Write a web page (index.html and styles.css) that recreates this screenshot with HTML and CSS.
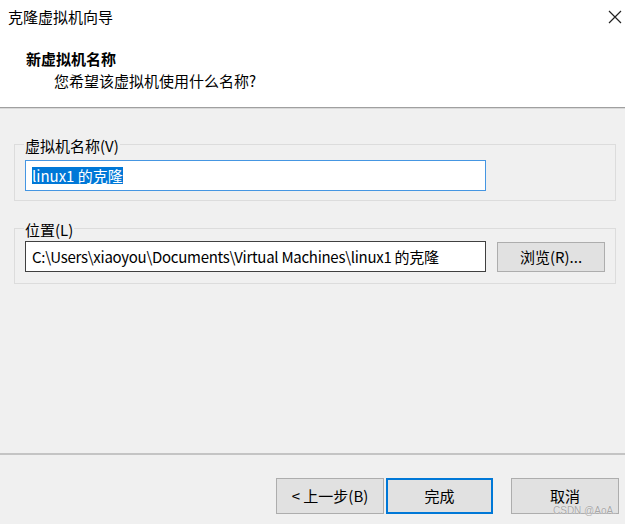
FILE: index.html
```html
<!DOCTYPE html>
<html lang="zh-CN">
<head>
<meta charset="utf-8">
<title>克隆虚拟机向导</title>
<link rel="stylesheet" href="styles.css">
</head>
<body>
<div class="dialog">
  <header class="header">
    <div class="titlebar">
      <span class="title">克隆虚拟机向导</span>
      <svg class="close" width="14" height="14" viewBox="0 0 14 14"><path d="M1 1 L13 13 M13 1 L1 13" stroke="#222" stroke-width="1.2" fill="none"/></svg>
    </div>
    <div class="heading">新虚拟机名称</div>
    <div class="subheading">您希望该虚拟机使用什么名称?</div>
  </header>
  <main class="main">
    <section class="group group-name">
      <span class="legend">虚拟机名称(V)</span>
      <div class="input input-focus"><span class="sel">linux1 的克隆</span></div>
    </section>
    <section class="group group-loc">
      <span class="legend">位置(L)</span>
      <div class="row">
        <div class="input input-plain">C:\Users\xiaoyou\Documents\Virtual Machines\linux1 的克隆</div>
        <div class="btn btn-browse">浏览(R)...</div>
      </div>
    </section>
  </main>
  <footer class="footer">
    <div class="btn btn-back">&lt; 上一步(B)</div>
    <div class="btn btn-finish">完成</div>
    <div class="btn btn-cancel">取消</div>
    <span class="watermark">CSDN @AoA.</span>
  </footer>
</div>
</body>
</html>
```
FILE: styles.css
```css
html, body {
  margin: 0;
  padding: 0;
}
body {
  width: 625px;
  height: 524px;
  overflow: hidden;
  font-family: "Noto Sans CJK SC", "Microsoft YaHei", sans-serif;
  font-size: 15px;
  color: #000;
  background: #f0f0f0;
}
.dialog {
  display: flex;
  flex-direction: column;
  height: 524px;
}
.header {
  background: #fff;
  height: 108px;
  box-sizing: border-box;
  padding-top: 7px;
  border-bottom: 1px solid #a0a0a0;
  box-shadow: 0 1px 0 #d9d9d9;
}
.titlebar {
  display: flex;
  justify-content: space-between;
  align-items: center;
  height: 20px;
  line-height: 20px;
  padding-left: 8px;
  padding-right: 3px;
}
.close {
  display: block;
}
.heading {
  margin-top: 22px;
  padding-left: 26px;
  line-height: 20px;
  font-weight: bold;
}
.subheading {
  margin-top: 2px;
  padding-left: 54px;
  line-height: 20px;
}
.main {
  flex: 1;
  padding-top: 36px;
}
.group {
  position: relative;
  margin-left: 14px;
  width: 602px;
  box-sizing: border-box;
  border: 1px solid #dcdcdc;
  padding: 0 10px;
}
.group-name {
  padding-top: 15px;
  padding-bottom: 9px;
}
.group-loc {
  margin-top: 27px;
  padding-top: 12px;
  padding-bottom: 11px;
}
.legend {
  position: absolute;
  top: -9px;
  left: 9px;
  padding: 0 1px;
  line-height: 20px;
  background: #f0f0f0;
}
.input {
  box-sizing: border-box;
  width: 461px;
  height: 31px;
  background: #fff;
  padding-left: 6px;
  display: flex;
  align-items: center;
  white-space: nowrap;
  overflow: hidden;
}
.input-focus {
  border: 1px solid #4596e2;
}
.input-plain {
  border: 1px solid #404040;
  letter-spacing: -0.28px;
}
.sel {
  background: #0078d7;
  color: #fff;
  line-height: 17px;
}
.row {
  display: flex;
  align-items: center;
  gap: 11px;
}
.btn {
  box-sizing: border-box;
  display: flex;
  align-items: center;
  justify-content: center;
  background: #e1e1e1;
  border: 1px solid #adadad;
  white-space: nowrap;
  line-height: 18px;
}
.btn-browse {
  width: 108px;
  height: 30px;
}
.footer {
  position: relative;
  height: 71px;
  box-sizing: border-box;
  border-top: 2px solid #c4c4c4;
  padding-top: 23px;
  padding-right: 6px;
  display: flex;
  justify-content: flex-end;
  align-items: flex-start;
}
.btn-back, .btn-finish, .btn-cancel {
  height: 36px;
}
.btn-back {
  width: 108px;
}
.btn-finish {
  width: 107px;
  margin-left: 2px;
  border: 2px solid #0078d7;
}
.btn-cancel {
  width: 108px;
  margin-left: 18px;
}
.watermark {
  position: absolute;
  left: 553px;
  top: 51px;
  font-family: "Liberation Sans", Arial, sans-serif;
  font-size: 10px;
  line-height: 10px;
  color: #a8a8a8;
  text-shadow: 0 0 1px #fff;
}
```
